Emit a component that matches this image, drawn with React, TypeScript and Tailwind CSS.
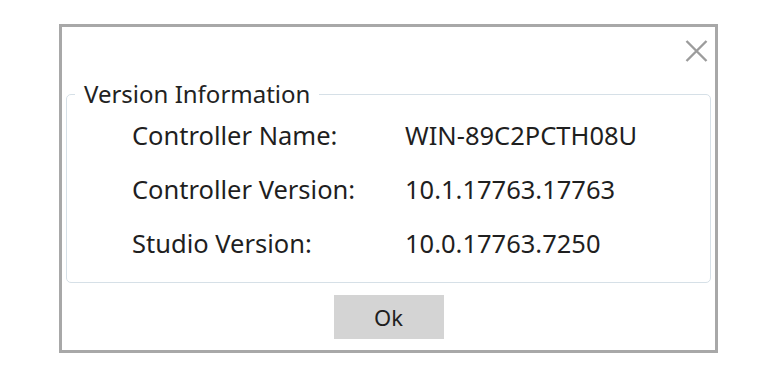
export default function App() {
  const rows = [
    ["Controller Name:", "WIN-89C2PCTH08U"],
    ["Controller Version:", "10.1.17763.17763"],
    ["Studio Version:", "10.0.17763.7250"],
  ];

  return (
    <div className="h-[382px] w-[770px] bg-white pl-[59px] pt-[24px] font-['Noto_Sans',sans-serif] text-[#1f1f1f]">
      <div className="relative flex h-[329px] w-[659px] flex-col border-[3px] border-[#a8a8a8] bg-white px-[4px] pt-[53px]">
        <button type="button" className="absolute right-[7px] top-[13px] text-[#9c9c9c]">
          <svg width="23" height="22" viewBox="0 0 23 22">
            <path d="M1.5 1L21.5 21M21.5 1L1.5 21" stroke="currentColor" strokeWidth="2.4" />
          </svg>
        </button>

        <fieldset className="rounded-[5px] border border-[#d6e0e7] px-[8px] pb-[24px]">
          <legend className="px-[9px] text-[24px] leading-[28px] text-[#222]">Version Information</legend>
          <div className="flex flex-col gap-[24px] pl-[57px] pt-[12px]">
            {rows.map(([label, value]) => (
              <div key={label} className="flex text-[25.5px] leading-[30px]">
                <span className="w-[273px] shrink-0">{label}</span>
                <span>{value}</span>
              </div>
            ))}
          </div>
        </fieldset>

        <div className="mt-[12px] flex justify-center">
          <button type="button" className="h-[44px] w-[110px] bg-[#d4d4d4] text-[22px] leading-[44px]">
            Ok
          </button>
        </div>
      </div>
    </div>
  );
}
